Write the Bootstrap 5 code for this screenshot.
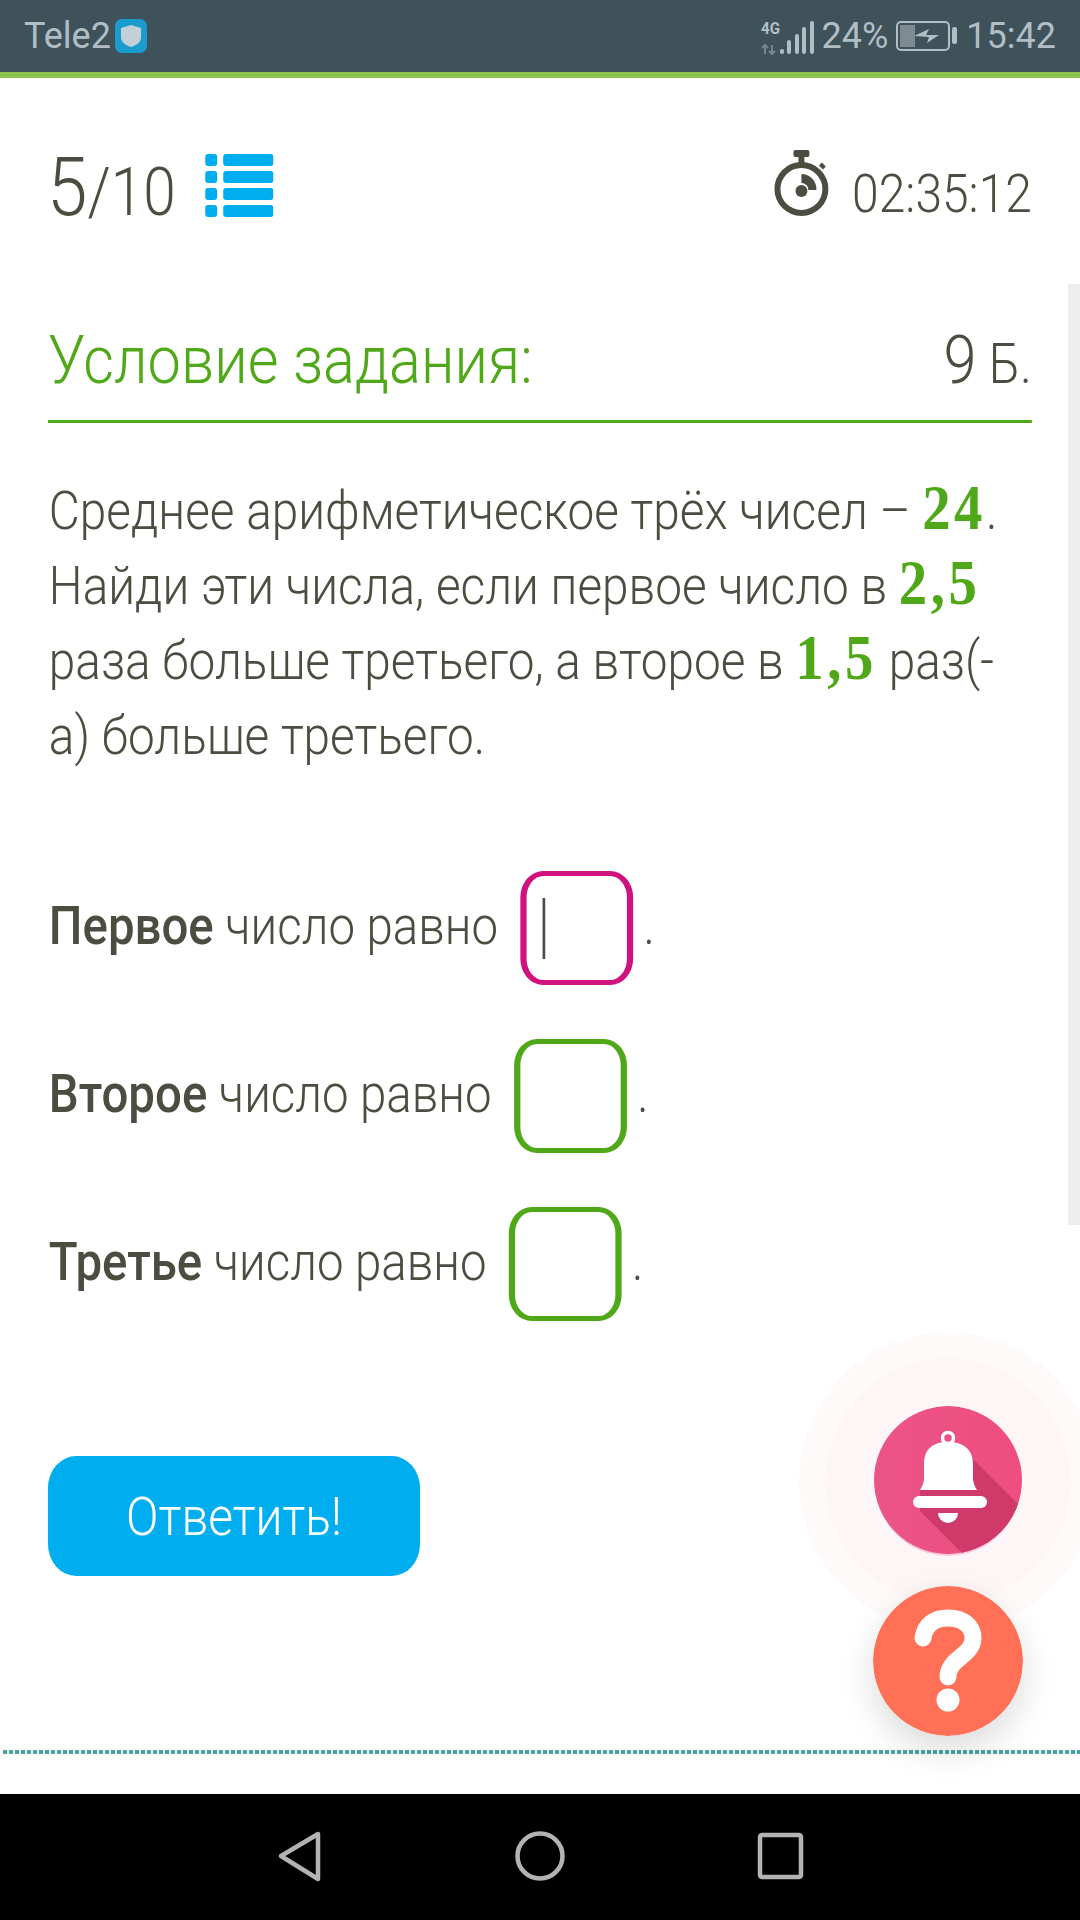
<!doctype html>
<html lang="ru">
<head>
  <meta charset="UTF-8">
  <meta content="width=device-width, initial-scale=1" name="viewport">
  <link href="https://cdn.jsdelivr.net/npm/bootstrap@5.3.0/dist/css/bootstrap.min.css" rel="stylesheet">
  <script src="https://cdn.jsdelivr.net/npm/bootstrap@5.3.0/dist/js/bootstrap.bundle.min.js"></script>
  <title>Условие задания</title>
  <style>
    body { width: 1080px; height: 1920px; overflow: hidden; font-family: Roboto, "Liberation Sans", sans-serif; font-weight: 300; color: #4c4c40; background: #fff; }
    .screen { width: 1080px; height: 1920px; }
    .status-bar { height: 78px; background: #3f5159; border-bottom: 6px solid #8bc34a; color: #b0bec5; font-size: 36px; font-weight: 400; padding: 0 24px; }
    /* the screenshot is a little narrower than it is tall, so the content column is squeezed as a whole */
    .squeeze { width: 1216px; transform: scaleX(.888); transform-origin: 0 0; }
    .top-row { height: 202px; padding: 68px 54px 0 53px; }
    .count-big { font-size: 82px; line-height: 1; font-weight: 300; }
    .count-rest { font-size: 66px; line-height: 1; font-weight: 300; }
    .list-icon { margin: 8px 0 0 33px; }
    .watch-icon { margin: 4px 26px 0 0; }
    .timer-text { font-size: 54px; line-height: 1; font-weight: 300; margin-top: 21px; }
    .task-head { margin: 0 54px; height: 143px; border-bottom: 3px solid #4fa817; padding-top: 40px; }
    .task-title { font-size: 67px; line-height: 1.2; color: #4fa817; margin: 0; font-weight: 300; }
    .task-score { font-size: 56px; line-height: 1.2; }
    .task-score b { font-size: 67px; font-weight: 300; }
    .task-text { margin: 50px 54px 0 55px; font-size: 53.75px; line-height: 75px; }
    .num { font-family: "Liberation Serif", serif; font-weight: 700; color: #4fa817; font-size: 64px; line-height: 1; letter-spacing: 4px; }
    .answers { margin: 98px 0 0 55px; gap: 54px; font-size: 53.4px; }
    .answers b { font-weight: 500; }
    .answer-box { width: 127px; height: 114px; border: solid #4fa817; border-width: 5px 7px; border-radius: 26px; margin: 0 12px 0 25px; }
    .answer-box.current { border-color: #d0127f; }
    .caret-line { width: 3px; height: 61px; background: #4c4c40; margin-left: 18px; }
    .reply-btn { width: 419px; height: 120px; margin: 135px 0 0 54px; background: #00aeef; border: 0; border-radius: 32px; color: #fff; font-size: 54px; font-weight: 300; }
    .reply-btn:hover { background: #00aeef; color: #fff; }
    .dot-line { position: absolute; left: 3px; right: 0; top: 1750px; height: 4px; background: repeating-linear-gradient(90deg, #45a5a5 0 4px, #fff 4px 6px); }
    .nav-bar { position: absolute; left: 0; right: 0; top: 1794px; height: 126px; background: #000; }
    .scroll-thumb { position: absolute; left: 1068px; top: 284px; width: 12px; height: 941px; background: #eeeeee; }
    .fab { position: absolute; left: 873px; width: 150px; height: 150px; border-radius: 50%; }
    .fab-bell { top: 1406px; box-shadow: 0 0 0 48px #fef5f6, 0 0 0 74px #fffafa; }
    .fab-help { top: 1586px; box-shadow: 0 14px 34px rgba(0,0,0,.14); }
  </style>
</head>
<body>
  <div class="screen position-relative">
    <div class="status-bar d-flex justify-content-between align-items-center">
      <div class="d-flex align-items-center gap-1">
        <span>Tele2</span>
        <svg width="32" height="34" viewBox="0 0 32 34"><rect width="32" height="34" rx="7" fill="#1b9ccf"/><path d="M16 6l10 3v9c0 5-4 8-10 10C10 26 6 23 6 18V9z" fill="#c3d0d8"/></svg>
      </div>
      <div class="d-flex align-items-center">
        <svg width="61" height="40" viewBox="761 14 61 40">
          <text x="761" y="32" font-family="Roboto" font-size="17" font-weight="700" fill="#b0bec5" textLength="19" lengthAdjust="spacingAndGlyphs">4G</text>
          <path d="M765 52v-9M762 46l3-3 3 3M772 43v9M769 49l3 3 3-3" fill="none" stroke="#76868d" stroke-width="2"/>
          <g fill="none" stroke="#b0bec5" stroke-width="4" stroke-linecap="round"><path d="M782 50v-1M789 50v-10M797 50V34M804 50V27M812 50V21"/></g>
        </svg>
        <span>24%</span>
        <svg class="ms-2" width="62" height="30" viewBox="0 0 62 30">
          <rect x="1" y="1" width="52" height="28" rx="4" fill="none" stroke="#b0bec5" stroke-width="2"/>
          <rect x="4" y="4" width="15" height="22" fill="#7d8c92"/>
          <path d="M18 15l15-7-3 6h13l-12 8 2-6z" fill="#b0bec5"/>
          <rect x="56" y="6" width="5" height="17" rx="2" fill="#b0bec5"/>
        </svg>
        <span class="ms-2">15:42</span>
      </div>
    </div>

    <div class="squeeze">
      <div class="top-row d-flex justify-content-between align-items-start">
        <div class="d-flex align-items-baseline">
          <span class="count-big">5</span><span class="count-rest">/10</span>
          <svg class="list-icon align-self-start" width="77" height="63" viewBox="0 0 68 63" preserveAspectRatio="none" fill="#00aeef">
            <rect y="0" width="12" height="12" rx="3"/><rect x="18" y="0" width="50" height="12" rx="3"/>
            <rect y="17" width="12" height="12" rx="3"/><rect x="18" y="17" width="50" height="12" rx="3"/>
            <rect y="34" width="12" height="12" rx="3"/><rect x="18" y="34" width="50" height="12" rx="3"/>
            <rect y="51" width="12" height="12" rx="3"/><rect x="18" y="51" width="50" height="12" rx="3"/>
          </svg>
        </div>
        <div class="d-flex align-items-start">
          <svg class="watch-icon" width="63" height="66" viewBox="0 0 56 66" preserveAspectRatio="none">
            <rect x="20" y="0" width="16" height="7" rx="2" fill="#4c4c40"/>
            <rect x="25" y="7" width="6" height="6" fill="#4c4c40"/>
            <path d="M47 14l4 4" stroke="#4c4c40" stroke-width="4"/>
            <circle cx="28" cy="39" r="24" fill="none" stroke="#4c4c40" stroke-width="6"/>
            <circle cx="28" cy="41" r="6" fill="#4c4c40"/>
            <path d="M28 24a15 15 0 0 1 15 16h-8a7 7 0 0 0-7-7z" fill="#4c4c40"/>
          </svg>
          <span class="timer-text">02:35:12</span>
        </div>
      </div>

      <div class="task-head d-flex justify-content-between align-items-baseline">
        <h2 class="task-title">Условие задания:</h2>
        <span class="task-score"><b>9</b> Б.</span>
      </div>

      <p class="task-text">Среднее арифметическое трёх чисел – <span class="num">24</span>. Найди эти числа, если первое число в <span class="num">2,5</span> раза больше третьего, а второе в <span class="num">1,5</span> раз(-а) больше третьего.</p>

      <div class="answers d-flex flex-column">
        <div class="d-flex align-items-center"><span class="mb-1"><b>Первое</b> число равно</span><div class="answer-box current d-flex align-items-center"><div class="caret-line"></div></div><span class="mb-1">.</span></div>
        <div class="d-flex align-items-center"><span class="mb-1"><b>Второе</b> число равно</span><div class="answer-box"></div><span class="mb-1">.</span></div>
        <div class="d-flex align-items-center"><span class="mb-1"><b>Третье</b> число равно</span><div class="answer-box"></div><span class="mb-1">.</span></div>
      </div>

      <button class="btn reply-btn" type="button">Ответить!</button>
    </div>

    <div class="dot-line"></div>
    <div class="scroll-thumb"></div>

    <svg class="fab fab-bell" viewBox="0 0 150 150">
      <defs>
        <linearGradient id="bellFill" x1="0" y1="0" x2="1" y2="0"><stop offset="0" stop-color="#ec5488"/><stop offset="1" stop-color="#ee4d7f"/></linearGradient>
        <clipPath id="bellClip"><circle cx="75" cy="74" r="74"/></clipPath>
      </defs>
      <circle cx="75" cy="77" r="73" fill="#f7c9d8"/>
      <circle cx="75" cy="74" r="74" fill="url(#bellFill)"/>
      <path d="M99 52L150 103V150H92L47 105V84H99z" fill="#cf3a6a" clip-path="url(#bellClip)"/>
      <circle cx="75" cy="32" r="5.5" fill="none" stroke="#fff" stroke-width="3.5"/>
      <path d="M75 36c-15 0-24 7-24 22v14c0 5-2 9-4 12h57c-2-3-4-7-4-12V58c0-15-10-22-25-22z" fill="#fff"/>
      <rect x="40" y="90" width="74" height="12" rx="6" fill="#fff"/>
      <path d="M65 107h20a10 10 0 0 1-20 0z" fill="#fff"/>
    </svg>
    <svg class="fab fab-help" viewBox="0 0 150 150">
      <circle cx="75" cy="75" r="75" fill="#ff7056"/>
      <path d="M50 52C52 38 62 32 75 32C90 32 100 40 100 52C100 70 75 72 75 91" fill="none" stroke="#fff" stroke-width="17" stroke-linecap="round" stroke-linejoin="round"/>
      <circle cx="75" cy="114" r="11.5" fill="#fff"/>
    </svg>

    <div class="nav-bar d-flex align-items-center">
      <svg width="1080" height="126" viewBox="0 0 1080 126" fill="none" stroke="#b3b3b3" stroke-width="4.5" stroke-linejoin="round">
        <path d="M318 40v45L281 62z"/>
        <ellipse cx="540" cy="62" rx="22.5" ry="22.5"/>
        <rect x="760" y="41" width="41" height="42" rx="2"/>
      </svg>
    </div>
  </div>
</body>
</html>
